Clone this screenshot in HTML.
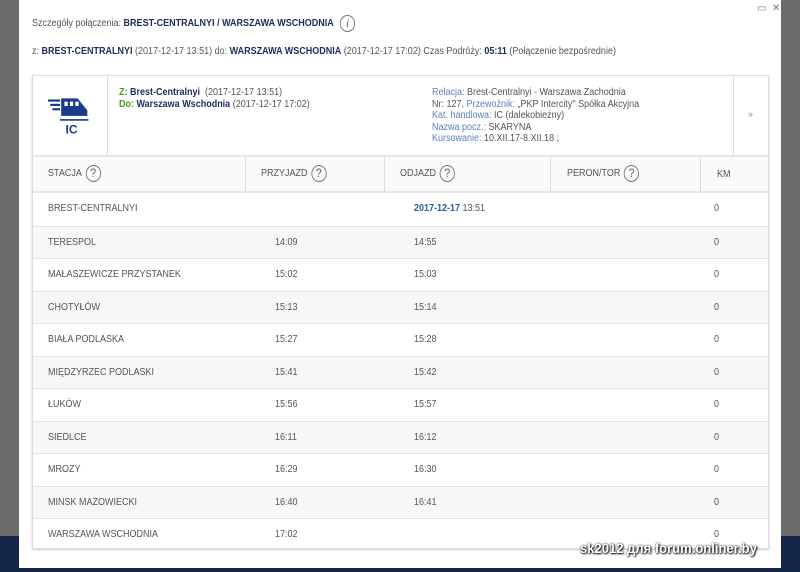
<!DOCTYPE html><html><head><meta charset="utf-8"><style>
*{margin:0;padding:0;box-sizing:border-box}
body{width:800px;height:572px;overflow:hidden;background:#6b6b6b;font-family:"Liberation Sans",sans-serif;position:relative;font-size:10px;color:#555}
.nav{position:absolute;left:0;top:536px;width:800px;height:36px;background:#13264a}
.modal{position:absolute;left:19px;top:0;width:762px;height:568px;background:#fff}
.a{position:absolute;white-space:nowrap}
.c{transform:scaleX(.9);transform-origin:left center}
b{color:#1a2d5c}
.q{display:inline-block;width:17px;height:17px;border:1.3px solid #777;border-radius:50%;text-align:center;font-size:12px;line-height:15px;color:#666;vertical-align:middle;margin-left:4px}
.tbl{position:absolute;left:32px;top:75px;width:737px;height:474px;border:1px solid #ddd;box-shadow:0 1px 2px #ccc}
.row{position:absolute;left:0;width:735px;height:32.5px;border-top:1px solid #e4e4e4}
.row span{position:absolute;top:10px;transform:scaleX(.9);transform-origin:left center;white-space:nowrap}
.lb{color:#5b7fbf}
</style></head><body>
<div class="nav"></div>
<div class="modal">
<div class="a" style="left:738px;top:3px;font-size:10px;color:#777">▭ &nbsp;✕</div>
<div class="a c" style="left:13px;top:15px">Szczegóły połączenia: <b>BREST-CENTRALNYI / WARSZAWA WSCHODNIA</b> <span class="q" style="font-family:'Liberation Serif';font-style:italic">i</span></div>
<div class="a c" style="left:13px;top:46px">z: <b>BREST-CENTRALNYI</b> (2017-12-17 13:51) do: <b>WARSZAWA WSCHODNIA</b> (2017-12-17 17:02) Czas Podróży: <b>05:11</b> (Połączenie bezpośrednie)</div>
</div>
<div class="tbl">
<div class="a" style="left:74px;top:0;width:1px;height:79px;background:#ddd"></div>
<div class="a" style="left:700px;top:0;width:1px;height:79px;background:#ddd"></div>
<svg class="a" style="left:14px;top:20px" width="48" height="44" viewBox="0 0 44 40"><g fill="#1a3a8c"><rect x="1" y="3" width="11" height="2"/><rect x="3" y="7" width="9" height="2"/><rect x="5" y="11" width="7" height="2"/><path d="M13 2h15l9 11v5H13z"/><rect x="12" y="21" width="26" height="1.5"/></g><g fill="#fff"><rect x="16" y="5" width="3" height="4"/><rect x="21" y="5" width="3" height="4"/><rect x="26" y="5" width="3" height="4"/></g><text x="17" y="34" font-size="11" font-weight="bold" fill="#1a3a8c" font-family="Liberation Sans">IC</text></svg>
<div class="a c" style="left:86px;top:11px;line-height:12px"><b><span style="color:#4a9a1a">Z:</span> Brest-Centralnyi</b> &nbsp;(2017-12-17 13:51)<br><b><span style="color:#4a9a1a">Do:</span> Warszawa Wschodnia</b> (2017-12-17 17:02)</div>
<div class="a c" style="left:399px;top:11px;line-height:11.5px"><span class="lb">Relacja:</span> Brest-Centralnyi - Warszawa Zachodnia<br>Nr: 127, <span class="lb">Przewoźnik:</span> „PKP Intercity" Spółka Akcyjna<br><span class="lb">Kat. handlowa:</span> IC (dalekobieżny)<br><span class="lb">Nazwa pocz.:</span> SKARYNA<br><span class="lb">Kursowanie:</span> 10.XII.17-8.XII.18 ;</div>
<div class="a" style="left:715px;top:33px;color:#888;font-size:9px">»</div>
<div class="a" style="left:0;top:79px;width:735px;height:38px;background:#fafafa;border-top:2px solid #e6e6e6;border-bottom:2px solid #e6e6e6"></div>
<div class="a" style="left:212px;top:80px;width:1px;height:36px;background:#ddd"></div>
<div class="a" style="left:351px;top:80px;width:1px;height:36px;background:#ddd"></div>
<div class="a" style="left:517px;top:80px;width:1px;height:36px;background:#ddd"></div>
<div class="a" style="left:667px;top:80px;width:1px;height:36px;background:#ddd"></div>
<div class="a c" style="left:15px;top:89px">STACJA<span class="q">?</span></div>
<div class="a c" style="left:228px;top:89px">PRZYJAZD<span class="q">?</span></div>
<div class="a c" style="left:367px;top:89px">ODJAZD<span class="q">?</span></div>
<div class="a c" style="left:534px;top:89px">PERON/TOR<span class="q">?</span></div>
<div class="a c" style="left:684px;top:93px">KM</div>
<div class="row" style="top:117px;border-top:none"><span style="left:15px">BREST-CENTRALNYI</span><span style="left:381px"><b style="color:#2a5aa8">2017-12-17</b> 13:51</span><span style="left:681px">0</span></div>
<div class="row" style="top:149.5px;background:#f7f7f7"><span style="left:15px">TERESPOL</span><span style="left:242px">14:09</span><span style="left:381px">14:55</span><span style="left:681px">0</span></div>
<div class="row" style="top:182px"><span style="left:15px">MAŁASZEWICZE PRZYSTANEK</span><span style="left:242px">15:02</span><span style="left:381px">15:03</span><span style="left:681px">0</span></div>
<div class="row" style="top:214.5px;background:#f7f7f7"><span style="left:15px">CHOTYŁÓW</span><span style="left:242px">15:13</span><span style="left:381px">15:14</span><span style="left:681px">0</span></div>
<div class="row" style="top:247px"><span style="left:15px">BIAŁA PODLASKA</span><span style="left:242px">15:27</span><span style="left:381px">15:28</span><span style="left:681px">0</span></div>
<div class="row" style="top:279.5px;background:#f7f7f7"><span style="left:15px">MIĘDZYRZEC PODLASKI</span><span style="left:242px">15:41</span><span style="left:381px">15:42</span><span style="left:681px">0</span></div>
<div class="row" style="top:312px"><span style="left:15px">ŁUKÓW</span><span style="left:242px">15:56</span><span style="left:381px">15:57</span><span style="left:681px">0</span></div>
<div class="row" style="top:344.5px;background:#f7f7f7"><span style="left:15px">SIEDLCE</span><span style="left:242px">16:11</span><span style="left:381px">16:12</span><span style="left:681px">0</span></div>
<div class="row" style="top:377px"><span style="left:15px">MROZY</span><span style="left:242px">16:29</span><span style="left:381px">16:30</span><span style="left:681px">0</span></div>
<div class="row" style="top:409.5px;background:#f7f7f7"><span style="left:15px">MINSK MAZOWIECKI</span><span style="left:242px">16:40</span><span style="left:381px">16:41</span><span style="left:681px">0</span></div>
<div class="row" style="top:442px"><span style="left:15px">WARSZAWA WSCHODNIA</span><span style="left:242px">17:02</span><span style="left:681px">0</span></div>
</div>
<div class="a" style="left:580px;top:540px;font-size:14px;font-weight:bold;color:#fff;text-shadow:0 0 2px #000,1px 1px 2px #000;transform:scaleX(.93);transform-origin:left">sk2012 для forum.onliner.by</div>
</body></html>
